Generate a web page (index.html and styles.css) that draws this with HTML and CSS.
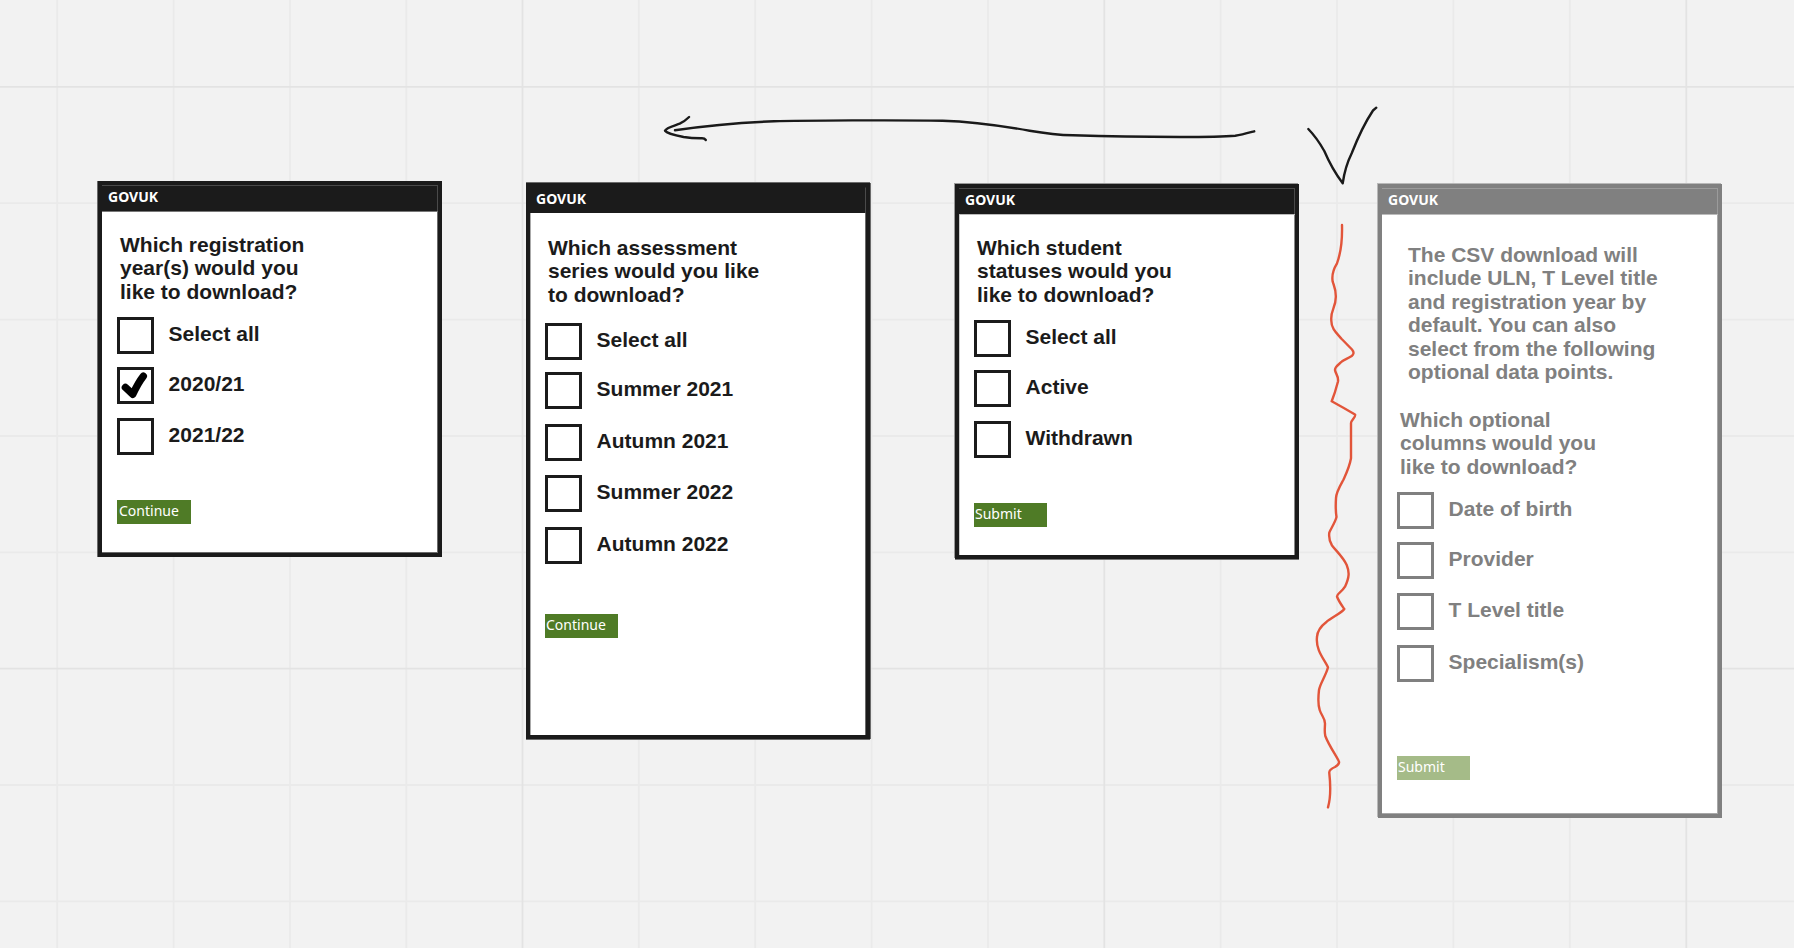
FILE: index.html
```html
<!DOCTYPE html>
<html lang="en">
<head>
<meta charset="utf-8">
<title>Download filters flow</title>
<link rel="stylesheet" href="styles.css">
</head>
<body>
<main class="board">
  <svg class="grid" width="1794" height="948" aria-hidden="true">
    <path class="grid-minor" d="M57.2 0V948M173.6 0V948M290 0V948M406.3 0V948M638.8 0V948M755.2 0V948M871.6 0V948M988 0V948M1220.6 0V948M1337 0V948M1453.4 0V948M1569.8 0V948M0 203.2H1794M0 319.6H1794M0 436H1794M0 552.3H1794M0 785H1794M0 901.4H1794"/>
    <path class="grid-major" d="M522.5 0V948M1104.3 0V948M1686.3 0V948M0 86.9H1794M0 668.7H1794"/>
  </svg>

  <section class="card card-years">
    <header class="card-header">GOVUK</header>
    <h2 class="question">Which registration<br>year(s) would you<br>like to download?</h2>
    <ul class="options">
      <li class="option"><span class="box"></span><span class="label">Select all</span></li>
      <li class="option"><span class="box"><svg class="tick" width="31" height="31" viewBox="0 0 31 31"><path d="M5.4 17.4L12.8 24.3Q18 13 23.3 6.2"/></svg></span><span class="label">2020/21</span></li>
      <li class="option"><span class="box"></span><span class="label">2021/22</span></li>
    </ul>
    <div class="button">Continue</div>
  </section>

  <section class="card card-series">
    <header class="card-header">GOVUK</header>
    <h2 class="question">Which assessment<br>series would you like<br>to download?</h2>
    <ul class="options">
      <li class="option"><span class="box"></span><span class="label">Select all</span></li>
      <li class="option"><span class="box"></span><span class="label">Summer 2021</span></li>
      <li class="option"><span class="box"></span><span class="label">Autumn 2021</span></li>
      <li class="option"><span class="box"></span><span class="label">Summer 2022</span></li>
      <li class="option"><span class="box"></span><span class="label">Autumn 2022</span></li>
    </ul>
    <div class="button">Continue</div>
  </section>

  <section class="card card-status">
    <header class="card-header">GOVUK</header>
    <h2 class="question">Which student<br>statuses would you<br>like to download?</h2>
    <ul class="options">
      <li class="option"><span class="box"></span><span class="label">Select all</span></li>
      <li class="option"><span class="box"></span><span class="label">Active</span></li>
      <li class="option"><span class="box"></span><span class="label">Withdrawn</span></li>
    </ul>
    <div class="button">Submit</div>
  </section>

  <section class="card card-columns">
    <header class="card-header">GOVUK</header>
    <p class="intro">The CSV download will<br>include ULN, T Level title<br>and registration year by<br>default. You can also<br>select from the following<br>optional data points.</p>
    <h2 class="question">Which optional<br>columns would you<br>like to download?</h2>
    <ul class="options">
      <li class="option"><span class="box"></span><span class="label">Date of birth</span></li>
      <li class="option"><span class="box"></span><span class="label">Provider</span></li>
      <li class="option"><span class="box"></span><span class="label">T Level title</span></li>
      <li class="option"><span class="box"></span><span class="label">Specialism(s)</span></li>
    </ul>
    <div class="button">Submit</div>
  </section>

  <svg class="ink" width="1794" height="948" aria-hidden="true">
    <path class="pen" d="M675 130.3C702 126.3 740 122.5 774 121.3C800 120.4 900 120 942.6 120.7C975 121.6 1003 126 1029.6 130.7C1043 133 1055 134.9 1073 135.3C1110 136.4 1150 136.9 1180 137C1205 137 1225 136.6 1235.2 135.7C1242 134.8 1248 133 1254.2 131.3"/>
    <path class="pen" d="M689.1 117Q684.5 121.5 679.7 123.7C675 125.5 666 127.5 665 130.7C667 133.5 676 135.5 683.6 137Q692 138.3 702 138.2C704.5 138.2 705 138.8 705.8 140"/>
    <path class="pen" d="M1308.3 129Q1317 138 1324.3 151Q1332 169 1342.7 183.3Q1345 167 1351.7 153.3Q1362 127 1373 110.5L1376.3 107.7"/>
    <path class="pen pen-red" d="M1342 225Q1342.6 248 1337 263.3C1333.5 269 1331.5 275 1332.7 281.7C1334 286 1336 289 1335.8 297C1335.8 308 1330.5 310 1331.3 320C1331 329 1337 333.5 1341.7 339L1352 349.5C1354.5 352.5 1353.5 354.5 1351.7 356C1348 358.5 1343.5 359.8 1341.7 361.7C1338 365 1334.7 367 1335 370C1335.5 374 1338.8 376 1338 381.5Q1335 393 1331.7 401.3Q1343 407.5 1355 414.5C1356.5 416.5 1351 420 1351 423V458.3C1349.5 467 1346.5 473 1343.3 480C1340 486 1336.3 492 1336 498C1335.5 506 1335.5 511 1336.5 517C1335 523 1330.5 529 1329.3 532.7Q1328.4 540 1332 545.5C1337 552 1343 557 1346.7 565C1349.5 572 1349.5 577 1345 586.7C1341.5 592.5 1337.3 593 1337 596.5C1338.5 601 1341.5 605 1344.3 609C1341.5 613 1331.5 617.5 1326.7 621.7C1321 626 1317.3 630 1317 637C1315.5 650 1324 659 1328 667.3C1326 675.5 1320.5 682.5 1319 690C1318 699 1318.3 706 1319.7 710C1321.5 716 1325 718 1325 723.5C1325 728 1324.2 731 1325.3 736C1328.5 744.5 1335 754 1338.5 760.5C1340.3 763.5 1337.5 765.5 1335 767C1331.5 768.5 1329 770.5 1329.3 773C1330.5 784 1331 797 1328 807.3"/>
  </svg>
</main>
</body>
</html>
```
FILE: styles.css
```css
* { box-sizing: border-box; }

body {
  margin: 0;
  background: #f2f2f2;
  font-family: "Liberation Sans", Arial, sans-serif;
}

.board {
  position: relative;
  width: 1794px;
  height: 948px;
  overflow: hidden;
}

.grid, .ink {
  position: absolute;
  inset: 0;
  display: block;
}
.grid path { fill: none; stroke-width: 1.8; }
.grid-minor { stroke: #eaeaea; }
.grid-major { stroke: #e3e3e3; }

/* Frames placed freely on the board */
.card {
  --line: #1b1b1b;
  --edge: #6b6b6b;
  --seam: #4a4a4a;
  --action: #4f7b26;
  position: absolute;
  width: 344px;
  display: flex;
  flex-direction: column;
  background: #fff;
  border: 4px solid var(--line);
  box-shadow: -1px 0 0 var(--edge), inset -1px 0 0 var(--edge), inset 0 -1px 0 var(--edge);
  color: var(--line);
}
.card-years { left: 98px; top: 181px; height: 376px; }
.card-series {
  left: 526px;
  top: 183px;
  height: 556px;
  box-shadow: 0 -1px 0 var(--edge), 1px 0 0 var(--edge), inset -1px 0 0 var(--edge), 0 1px 0 var(--edge), inset 1px 0 0 #aaa;
}
.card-status {
  left: 955px;
  top: 184px;
  height: 375px;
  box-shadow: -1px -1px 0 #999, 0 1px 0 #777, inset -1px 0 0 #888, inset 1px 0 0 #ccc;
}
.card-columns {
  --line: #808080;
  --edge: #b0b0b0;
  --seam: #9b9b9b;
  --action: #a5bb88;
  left: 1378px;
  top: 184px;
  height: 634px;
  box-shadow: -1px -1px 0 #b8b8b8, inset -1px -1px 0 #a8a8a8;
}

.card-header {
  height: 26px;
  padding-left: 6px;
  background: var(--line);
  border-top: 1px solid var(--seam);
  border-right: 1px solid var(--seam);
  color: #fff;
  font: 700 14px/22px "Noto Sans", "Open Sans", sans-serif;
  flex: none;
}
.card-series .card-header { border-top-color: var(--line); }
.card-years .card-header { box-shadow: 0 1px 0 #777; }
.card-status .card-header, .card-columns .card-header { box-shadow: 0 1px 0 #bbb; }

.question, .intro {
  margin: 0;
  font-size: 21px;
  font-weight: 700;
  line-height: 23.4px;
  white-space: nowrap;
}
.question { margin-left: 18px; height: 70px; }
.intro { margin: 29px 0 0 26px; height: 140px; }
.card-years .question { margin-top: 22px; }
.card-series .question { margin-top: 23px; }
.card-status .question { margin-top: 22px; }
.card-columns .question { margin-top: 25px; }

.options {
  list-style: none;
  margin: 14px 0 0;
  padding: 0 0 0 15px;
  display: flex;
  flex-direction: column;
  gap: 14px;
}
.card-series .options { margin-top: 17px; }
.option { display: flex; gap: 14.6px; height: 37px; }
.option:nth-child(2) { margin-top: -1px; }
.card-series .option:nth-child(2) { margin-top: -2px; }
.card-series .option:nth-child(3),
.card-series .option:nth-child(5),
.card-columns .option:nth-child(4) { margin-top: 1px; }

.box {
  width: 37px;
  height: 37px;
  border: 3px solid var(--line);
  flex: none;
}
.label {
  padding-top: 5px;
  font-size: 21px;
  font-weight: 700;
  line-height: 23px;
  white-space: nowrap;
}
.tick { display: block; }
.tick path {
  fill: none;
  stroke: #000;
  stroke-width: 7.4;
  stroke-linecap: round;
  stroke-linejoin: round;
}

.button {
  width: 73px;
  height: 24px;
  margin: 45px 0 0 15px;
  padding-left: 1px;
  background: var(--action);
  color: #fff;
  font: 400 14px/22px "Noto Sans", "Open Sans", sans-serif;
}
.card-years .button { width: 74px; padding-left: 2px; }
.card-series .button { margin-top: 50px; }
.card-columns .button { margin-top: 74px; }

.pen {
  fill: none;
  stroke: #1a1a1a;
  stroke-width: 2.4;
  stroke-linecap: round;
  stroke-linejoin: round;
}
.pen-red { stroke: #e2553a; }
```
